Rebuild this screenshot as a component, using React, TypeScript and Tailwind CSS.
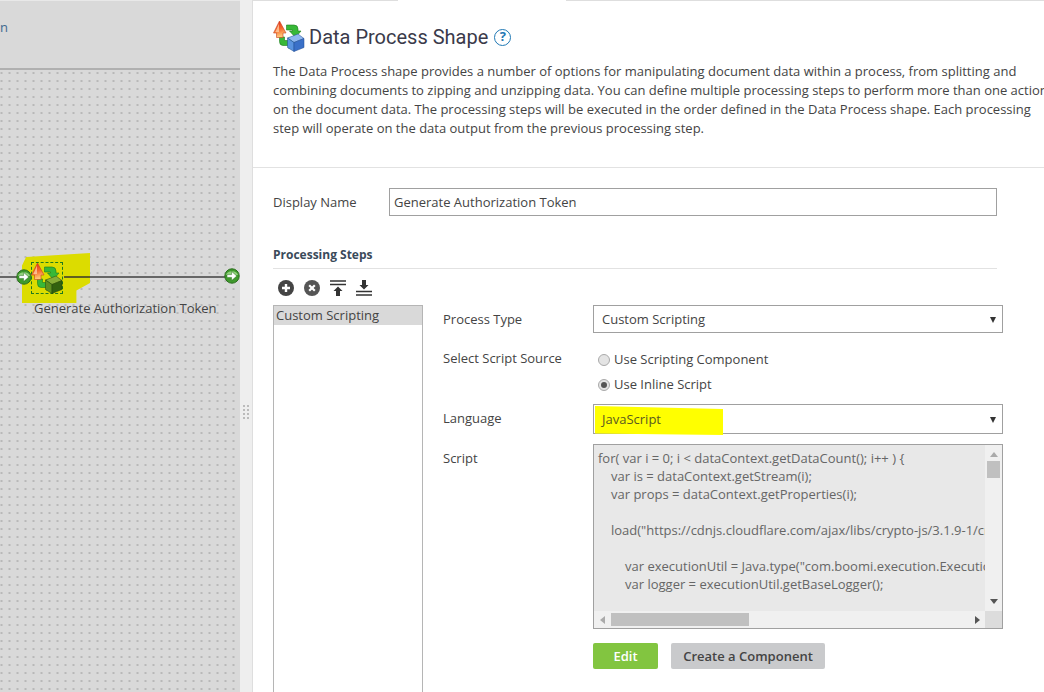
import { useId } from "react";

const SANS = "font-['Open_Sans','Liberation_Sans',sans-serif]";

const SCRIPT_LINES = [
  { indent: 0, text: "for( var i = 0; i < dataContext.getDataCount(); i++ ) {" },
  { indent: 13, text: "var is = dataContext.getStream(i);" },
  { indent: 13, text: "var props = dataContext.getProperties(i);" },
  { indent: 0, text: "" },
  { indent: 13, text: 'load("https://cdnjs.cloudflare.com/ajax/libs/crypto-js/3.1.9-1/crypto-js.js");' },
  { indent: 0, text: "" },
  { indent: 27, text: 'var executionUtil = Java.type("com.boomi.execution.ExecutionUtil");' },
  { indent: 27, text: "var logger = executionUtil.getBaseLogger();" },
];

function ShapeIcon({ green = false }: { green?: boolean }) {
  const id = useId();
  const top = green ? "#86ad38" : "#8fb8f0";
  const left = green ? "#5f9020" : "#5a94e0";
  const right = green ? "#33620f" : "#3a70c8";
  const edge = green ? "#23450c" : "#1f4a90";
  return (
    <svg width="32" height="32" viewBox="0 0 32 32">
      <defs>
        <linearGradient id={id} x1="0" y1="0" x2="0.2" y2="1">
          <stop offset="0" stopColor="#e02a18" />
          <stop offset="0.55" stopColor="#f4682c" />
          <stop offset="1" stopColor="#ffc878" />
        </linearGradient>
      </defs>
      <path d="M13.5 5 H21 Q25 5 25 9 V11 H28 L22.5 17.5 L16.5 11 H19.5 V10 H13.5 Z" fill="#38b838" stroke="#1c7c1c" strokeWidth="0.6" />
      <path d="M6.5 17 L11.5 17 V20.5 H16 V17.5 L21.5 23 L16 28.5 V25.5 H10 Q6.5 25.5 6.5 21.5 Z" fill="#38b838" stroke="#1c7c1c" strokeWidth="0.6" />
      <path d="M6.5 1 L13 13 L10 13 L10 17.5 L3.5 17.5 L3.5 13 L0.5 13 Z" fill={`url(#${id})`} stroke="#c8401c" strokeWidth="0.6" />
      <path d="M6 3.5 L2.4 12 L6 12 Z" fill="#ffd8b0" opacity="0.7" />
      <path d="M14.5 18 L25 14 L31 18.5 L21 22.5 Z" fill={top} stroke={edge} strokeWidth="0.5" />
      <path d="M14.5 18 L21 22.5 L21 31.5 L14.5 27.5 Z" fill={left} stroke={edge} strokeWidth="0.5" />
      <path d="M21 22.5 L31 18.5 L31 27.5 L21 31.5 Z" fill={right} stroke={edge} strokeWidth="0.5" />
    </svg>
  );
}

function ArrowNode() {
  return (
    <svg width="16" height="16" viewBox="0 0 16 16">
      <circle cx="8" cy="8" r="7.2" fill="#3f9a2c" stroke="#2b6e1e" />
      <path d="M2 7 A6.2 5 0 0 1 14 7 Z" fill="#8fd07a" />
      <path d="M3 6.6 H7.6 V3.4 L12.8 8 L7.6 12.6 V9.4 H3 Z" fill="#fff" stroke="#2b6e1e" strokeWidth="0.5" />
    </svg>
  );
}

function Caret() {
  return <span className="ml-auto h-0 w-0 border-x-[3.5px] border-t-[6px] border-x-transparent border-t-[#333]" />;
}

function StepTools() {
  return (
    <div className="mt-[10px] flex h-[17px] items-center gap-[10px] pl-[5px]">
      <svg width="16" height="16" viewBox="0 0 16 16">
        <circle cx="8" cy="8" r="8" fill="#444" />
        <path d="M8 4 V12 M4 8 H12" stroke="#fff" strokeWidth="2.4" />
      </svg>
      <svg width="16" height="16" viewBox="0 0 16 16">
        <circle cx="8" cy="8" r="8" fill="#555" />
        <path d="M5.2 5.2 L10.8 10.8 M10.8 5.2 L5.2 10.8" stroke="#fff" strokeWidth="2.2" />
      </svg>
      <svg width="16" height="16" viewBox="0 0 16 16">
        <path d="M0 1 H16 M0 4.5 H16" stroke="#333" strokeWidth="1.6" />
        <path d="M8 6.5 L12.5 11 H10 V16 H6 V11 H3.5 Z" fill="#333" />
      </svg>
      <svg width="16" height="16" viewBox="0 0 16 16">
        <path d="M6 0 H10 V5 H12.5 L8 9.5 L3.5 5 H6 Z" fill="#333" />
        <path d="M0 11.5 H16 M0 15 H16" stroke="#333" strokeWidth="1.6" />
      </svg>
    </div>
  );
}

function Canvas() {
  return (
    <div className="relative h-full w-[240px] shrink-0 overflow-hidden bg-[#d9d9d9]">
      <div className="h-px bg-[#e8e8e8]" />
      <div className="h-[69px] border-b-2 border-[#b0b0b0] pt-[17px] text-[13px] text-[#3f6a90]">
        <span className="block leading-[18px]">n</span>
      </div>
      <div className="h-[622px] bg-[radial-gradient(ellipse_0.7px_1.2px,#b4b4b4_80%,transparent_100%)] bg-[length:8px_8px] bg-[position:-2.5px_-1px]" />

      {/* process diagram */}
      <div className="absolute left-0 top-[276px] h-[2px] w-[232px] bg-[#666]" />
      <div className="absolute left-[22px] top-[253px] h-[50px] w-[68px] bg-[#dcdc00] [clip-path:polygon(6%_8%,100%_0,100%_60%,80%_75%,80%_100%,0_100%,0_25%)]" />
      <div className="absolute left-[64px] top-[276px] h-[2px] w-[26px] bg-[#5f5f20]" />
      <div className="absolute left-[31px] top-[262px] h-[32px] w-[32px] border border-dashed border-[#1f7a1f]" />
      <div className="absolute left-[16px] top-[269px]"><ArrowNode /></div>
      <div className="absolute left-[31px] top-[262px]"><ShapeIcon green /></div>
      <div className="absolute left-[224px] top-[268px]"><ArrowNode /></div>
      <div className="absolute left-[34px] top-[299px] whitespace-nowrap text-[13px] leading-[18px] text-[#444]">
        Generate Authorization Token
      </div>
    </div>
  );
}

function Splitter() {
  return (
    <div className="flex h-full w-[13px] shrink-0 items-center justify-center border-r border-[#dedede] bg-[#eeeeee]">
      <div className="mt-[132px] grid grid-cols-2 gap-[2px]">
        {[0, 1, 2, 3, 4, 5, 6, 7].map((n) => (
          <span key={n} className="h-[2px] w-[2px] bg-[#bbb]" />
        ))}
      </div>
    </div>
  );
}

function ScriptBox() {
  return (
    <div className="grid h-[185px] w-[410px] grid-cols-[1fr_17px] grid-rows-[1fr_17px] border border-[#a0a0a0] bg-[#f0f0f0]">
      <div className="overflow-hidden bg-[#e8e8e8] pl-[4px] pt-[4px] text-[13px] leading-[18px] text-[#666]">
        {SCRIPT_LINES.map((line, i) => (
          <div key={i} className="h-[18px] whitespace-nowrap" style={{ paddingLeft: line.indent }}>
            {line.text}
          </div>
        ))}
      </div>
      <div className="flex flex-col items-center bg-[#f0f0f0] pt-[7px]">
        <span className="h-0 w-0 border-x-[4px] border-b-[5px] border-x-transparent border-b-[#aaa]" />
        <span className="mt-[4px] h-[17px] w-[13px] bg-[#c0c0c0]" />
        <span className="mt-[121px] h-0 w-0 border-x-[4px] border-t-[5px] border-x-transparent border-t-[#555]" />
      </div>
      <div className="flex items-center bg-[#f0f0f0] pl-[6px] pr-[5px]">
        <span className="h-0 w-0 border-y-[4px] border-r-[5px] border-y-transparent border-r-[#aaa]" />
        <span className="ml-[6px] h-[13px] w-[138px] bg-[#c0c0c0]" />
        <span className="ml-auto h-0 w-0 border-y-[4px] border-l-[5px] border-y-transparent border-l-[#555]" />
      </div>
      <div className="bg-[#dcdcdc]" />
    </div>
  );
}

function ScriptForm() {
  return (
    <div className="ml-[20px] flex-1 text-[13px] text-[#444]">
      <div className="flex h-[28px] items-center">
        <span className="w-[150px] pt-[2px]">Process Type</span>
        <div className="flex h-[28px] w-[410px] items-center border border-[#a0a0a0] pl-[8px] pr-[6px] pt-[2px]">
          Custom Scripting
          <Caret />
        </div>
      </div>

      <div className="mt-[18px] flex">
        <span className="-mt-[2px] w-[150px] leading-[18px]">Select Script Source</span>
        <div className="flex flex-col gap-[7px] pl-[5px]">
          <div className="flex h-[18px] items-center gap-[4px]">
            <span className="h-[12px] w-[12px] rounded-full border border-[#aaa] bg-[#e4e4e4]" />
            Use Scripting Component
          </div>
          <div className="flex h-[18px] items-center gap-[4px]">
            <span className="flex h-[12px] w-[12px] items-center justify-center rounded-full border border-[#aaa] bg-[#e4e4e4]">
              <span className="h-[6px] w-[6px] rounded-full bg-[#555]" />
            </span>
            Use Inline Script
          </div>
        </div>
      </div>

      <div className="mt-[10px] flex h-[30px] items-center">
        <span className="w-[150px]">Language</span>
        <div className="relative flex h-[30px] w-[410px] items-center border border-[#a0a0a0] pl-[8px] pr-[6px] pt-[2px]">
          <span className="absolute left-[1px] top-[1px] h-[29px] w-[128px] bg-[#ffff00] [clip-path:polygon(0_0,100%_10%,100%_100%,0_95%)]" />
          <span className="relative text-[#5a5a20]">JavaScript</span>
          <Caret />
        </div>
      </div>

      <div className="mt-[10px] flex">
        <span className="w-[150px] pt-[5px] leading-[18px]">Script</span>
        <ScriptBox />
      </div>

      <div className="ml-[150px] mt-[14px] flex gap-[13px]">
        <button className="h-[26px] w-[65px] rounded-[2px] bg-[#82c540] pt-[2px] text-[13px] font-semibold text-white">Edit</button>
        <button className="h-[26px] w-[154px] rounded-[2px] bg-[#c9cacc] pt-[2px] text-[13px] font-semibold text-[#444]">
          Create a Component
        </button>
      </div>
    </div>
  );
}

function Details() {
  return (
    <div className="h-full min-w-0 flex-1 overflow-hidden bg-white">
      <div className="flex h-px">
        <span className="w-[145px] bg-[#dedede]" />
        <span className="w-[168px]" />
        <span className="flex-1 bg-[#dedede]" />
      </div>
      <div className="h-[167px] border-b border-[#e2e2e2] pl-[20px] pt-[19px]">
        <div className="flex h-[32px] items-center">
          <ShapeIcon />
          <h1 className="ml-[4px] pt-[2px] font-['Roboto',sans-serif] text-[20px] font-normal text-[#3a3a4a]">
            Data Process Shape
          </h1>
          <span className="ml-[6px] mt-[2px] flex h-[17px] w-[17px] items-center justify-center rounded-full border-[1.5px] border-[#1f78b4] text-[13px] font-bold text-[#1f78b4]">
            ?
          </span>
        </div>
        <div className="mt-[10px] whitespace-nowrap text-[13px] leading-[19px] text-[#444]">
          <p>The Data Process shape provides a number of options for manipulating document data within a process, from splitting and</p>
          <p>combining documents to zipping and unzipping data. You can define multiple processing steps to perform more than one action</p>
          <p>on the document data. The processing steps will be executed in the order defined in the Data Process shape. Each processing</p>
          <p>step will operate on the data output from the previous processing step.</p>
        </div>
      </div>

      <div className="pl-[20px]">
        <div className="mt-[20px] flex h-[28px] items-center text-[13px] text-[#444]">
          <span className="w-[116px] pt-[2px]">Display Name</span>
          <div className="flex h-[28px] w-[608px] items-center border border-[#a0a0a0] pl-[4px] pt-[2px]">
            Generate Authorization Token
          </div>
        </div>

        <div className="mt-[29px] h-[24px] w-[724px] border-b border-[#e2e2e2] pt-px text-[12px] font-bold leading-[18px] text-[#3a4a5a]">
          Processing Steps
        </div>
        <StepTools />

        <div className="mt-[9px] flex h-[400px]">
          <div className="w-[150px] shrink-0 border border-[#b5b5b5]">
            <div className="h-[19px] bg-[#d9d9d9] pl-[2px] text-[13px] leading-[19px] text-[#444]">Custom Scripting</div>
          </div>
          <ScriptForm />
        </div>
      </div>
    </div>
  );
}

export default function App() {
  return (
    <div className={`flex h-[692px] w-[1044px] overflow-hidden bg-white ${SANS}`}>
      <Canvas />
      <Splitter />
      <Details />
    </div>
  );
}
